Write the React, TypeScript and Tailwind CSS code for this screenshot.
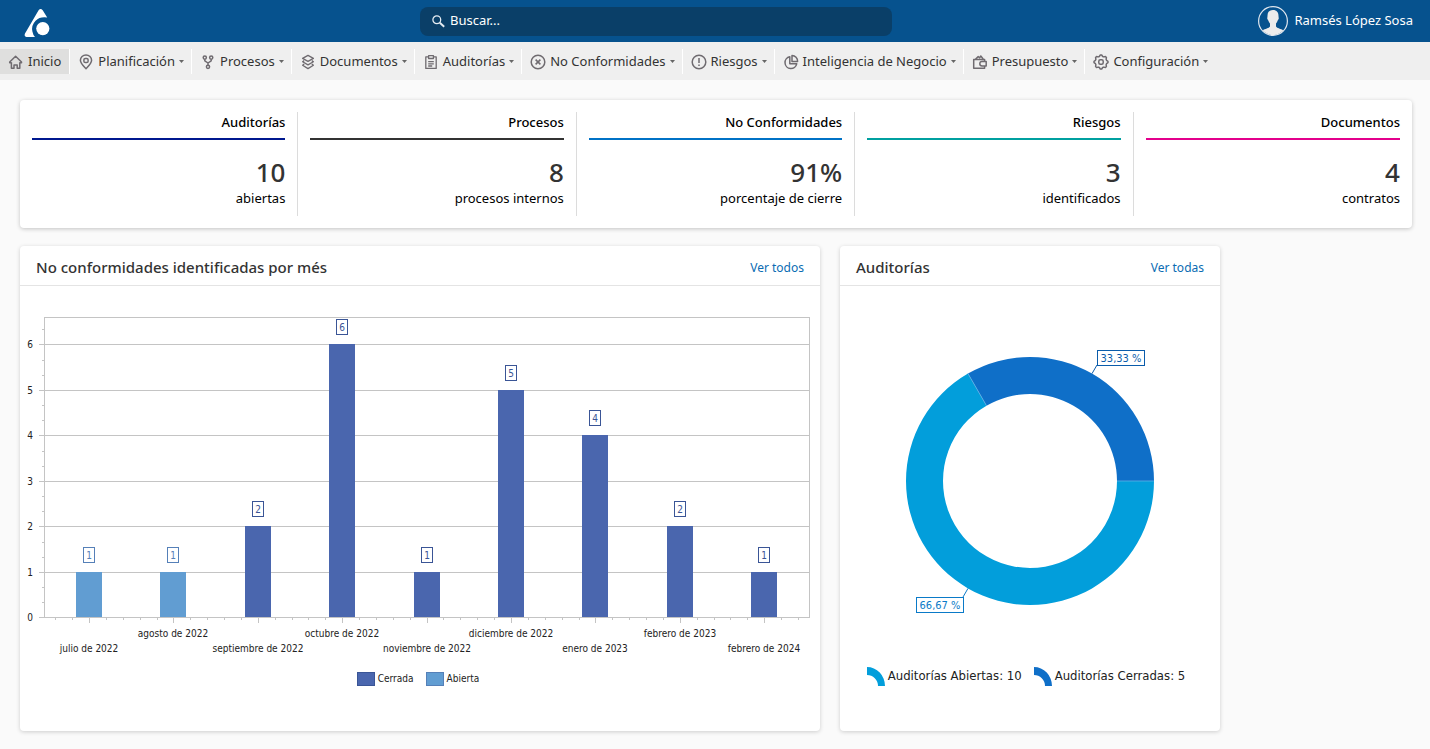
import type { ReactNode } from 'react';

const iconProps = {
  viewBox: '0 0 16 16',
  fill: 'none',
  stroke: '#6f6b70',
  strokeWidth: 1.5,
  strokeLinejoin: 'round' as const,
  'aria-hidden': true,
  className: 'size-4 shrink-0',
};

const gearTeeth = 8;
const gearPath =
  Array.from({ length: gearTeeth * 4 }, (_, i) => {
    const angle = ((i - 0.5) / (gearTeeth * 4)) * Math.PI * 2;
    const r = i % 4 < 2 ? 7 : 5.8;
    const x = 8 + r * Math.sin(angle);
    const y = 8 - r * Math.cos(angle);
    return `${i ? 'L' : 'M'}${x.toFixed(2)} ${y.toFixed(2)}`;
  }).join('') + 'Z';

const icons: Record<string, ReactNode> = {
  home: (
    <svg {...iconProps}>
      <path d="M3.4 8.800H1.700V8L7.600 2.200 13.500 8V8.800H11.800M3.400 8.200V14.200H6V11H9.200V14.200H11.800V8.200" />
    </svg>
  ),
  pin: (
    <svg {...iconProps}>
      <path d="M8 14.8C5 11.6 2.4 9.2 2.4 6.3a5.6 5.4 0 0 1 11.2 0C13.6 9.2 11 11.6 8 14.8Z" />
      <rect x="5.9" y="4.4" width="4.2" height="4.2" rx="1.4" />
    </svg>
  ),
  fork: (
    <svg {...iconProps}>
      <circle cx="4.8" cy="3.6" r="1.6" />
      <circle cx="11.2" cy="3.6" r="1.6" />
      <circle cx="8" cy="12.8" r="1.6" />
      <path d="M4.8 5.2v1.6L8 9l3.2-2.2V5.2M8 9v2.2" />
    </svg>
  ),
  layers: (
    <svg {...iconProps} strokeWidth={1.3}>
      <path d="M8 1.4 13.4 4.4 8 7.4 2.6 4.4ZM4.200 6.600 2.600 7.700 8 10.900l5.400-3.200L11.800 6.600M4.200 9.900l-1.600 1.300L8 14.600l5.400-3.400L11.800 9.900" />
    </svg>
  ),
  clipboard: (
    <svg {...iconProps}>
      <path d="M5.5 2.8H2.8v11.6h10.4V2.8h-2.700M5.600 1.700h4.800v2.800H5.600ZM5.200 7.600h5.600M5.200 9.800h5.600M5.200 12h4" strokeWidth="1.3" />
    </svg>
  ),
  close: (
    <svg {...iconProps}>
      <circle cx="8" cy="8" r="6.8" />
      <path d="m5.6 5.6 4.8 4.8M10.4 5.6l-4.8 4.8" />
    </svg>
  ),
  alert: (
    <svg {...iconProps}>
      <circle cx="8" cy="8" r="6.8" />
      <path d="M8 4v5M8 10.4v1.6" />
    </svg>
  ),
  pie: (
    <svg {...iconProps}>
      <path d="M6.8 2.8a5.9 5.9 0 1 0 6.9 7H6.8Z" />
      <path d="M9 1.4a5.8 5.8 0 0 1 5.6 6H9Z" />
    </svg>
  ),
  wallet: (
    <svg {...iconProps}>
      <path d="M12.600 7.600V5.400H1.700v8.800h10.900v-2M14.200 7.600H10a2.200 2.200 0 0 0 0 4.400h4.200ZM3.400 5.200l2.800-2.600 1.400 1.200L8.800 2l2.400 3" />
    </svg>
  ),
  gear: (
    <svg {...iconProps}>
      <path d={gearPath} />
      <rect x="5.8" y="5.8" width="4.4" height="4.4" rx="1.5" />
    </svg>
  ),
};

const navItems = [
  { label: 'Inicio', icon: 'home', active: true },
  { label: 'Planificación', icon: 'pin' },
  { label: 'Procesos', icon: 'fork' },
  { label: 'Documentos', icon: 'layers' },
  { label: 'Auditorías', icon: 'clipboard' },
  { label: 'No Conformidades', icon: 'close' },
  { label: 'Riesgos', icon: 'alert' },
  { label: 'Inteligencia de Negocio', icon: 'pie' },
  { label: 'Presupuesto', icon: 'wallet' },
  { label: 'Configuración', icon: 'gear' },
];

const stats = [
  { title: 'Auditorías', value: '10', note: 'abiertas', line: 'border-[#00188f]' },
  { title: 'Procesos', value: '8', note: 'procesos internos', line: 'border-[#333333]' },
  { title: 'No Conformidades', value: '91%', note: 'porcentaje de cierre', line: 'border-[#0072c6]' },
  { title: 'Riesgos', value: '3', note: 'identificados', line: 'border-[#00a0a0]' },
  { title: 'Documentos', value: '4', note: 'contratos', line: 'border-[#e3008c]' },
];

const closed = { fill: '#4a66ae', stroke: '#3a5596' };
const open = { fill: '#619dd2', stroke: '#5580b8' };

const months = [
  { label: 'julio de 2022', count: 1, series: open },
  { label: 'agosto de 2022', count: 1, series: open },
  { label: 'septiembre de 2022', count: 2, series: closed },
  { label: 'octubre de 2022', count: 6, series: closed },
  { label: 'noviembre de 2022', count: 1, series: closed },
  { label: 'diciembre de 2022', count: 5, series: closed },
  { label: 'enero de 2023', count: 4, series: closed },
  { label: 'febrero de 2023', count: 2, series: closed },
  { label: 'febrero de 2024', count: 1, series: closed },
];

const chartFont = "font-['DejaVu_Sans_Condensed','DejaVu_Sans',sans-serif]";

function Header() {
  return (
    <header className="grid h-[42px] grid-cols-[420fr_472fr_538fr] items-center bg-[#06528e] text-white">
      <a href="#inicio" aria-label="Inicio" className="ml-5 w-fit">
        <svg viewBox="20 4 34 34" className="size-[34px]" aria-hidden="true">
          <path
            fill="#fff"
            d="M38.6 10.2Q40.6 7.6 42.7 10.2L47.2 17.6Q40 16.4 35.6 20.8Q31 25.6 32.4 31.6Q33 35 35 37H26.4Q23.8 36.4 25 33.6Z"
          />
          <circle cx="42.8" cy="28.6" r="6.6" fill="#fff" />
        </svg>
      </a>
      <label className="flex h-[29px] items-center gap-[5px] rounded-lg bg-[#0a3f68] px-3 text-[13px]">
        <svg viewBox="0 0 13 13" className="size-[13px] shrink-0" fill="none" stroke="#e6ecf2" aria-hidden="true">
          <circle cx="4.8" cy="4.8" r="3.9" strokeWidth="1.3" />
          <path d="m7.8 7.8 4.4 4" strokeWidth="1.9" />
        </svg>
        <input
          type="search"
          aria-label="Buscar"
          placeholder="Buscar..."
          className="min-w-0 flex-1 bg-transparent outline-none placeholder:text-white"
        />
      </label>
      <button type="button" className="mr-[17px] flex items-center gap-[5px] justify-self-end text-[13px]">
        <svg viewBox="0 0 32 32" className="size-8" aria-hidden="true">
          <circle cx="16" cy="16" r="14.4" fill="none" stroke="#dfe6ee" strokeWidth="1.2" />
          <path
            fill="#ececec"
            d="M16 5c-3.900 0-5.600 2.600-5.500 6 0 1.200-.4 1.600-.2 2.800.2 1 .9 1.200 1.100 2 .3 1.200 1 2.100 1.600 2.800v2.800c-1 1.800-5 2.300-7.300 3.900A14.300 14.300 0 0 0 16 30.200a14.300 14.300 0 0 0 10.300-4.900c-2.300-1.600-6.300-2.100-7.300-3.900v-2.800c.6-.7 1.300-1.600 1.600-2.800.2-.8.900-1 1.100-2 .2-1.200-.2-1.600-.2-2.800.1-3.400-1.600-6-5.500-6Z"
          />
        </svg>
        Ramsés López Sosa
      </button>
    </header>
  );
}

function Nav() {
  return (
    <nav className="h-[38px] bg-[#efefef] pt-[7px]">
      <ul className="flex">
        {navItems.map((item) => (
          <li key={item.label} className="border-r border-white last:border-r-0">
            <a
              href="#"
              className={`flex h-[25px] items-center gap-1 whitespace-nowrap pl-2 text-[13px] text-[#333] ${
                item.active ? 'bg-[#dfdfde] pr-2' : 'pr-[7px]'
              }`}
            >
              {icons[item.icon]}
              {item.label}
              {!item.active && (
                <svg viewBox="0 0 5 3" className="h-[3px] w-[5px]" aria-hidden="true">
                  <path d="M0 0h5L2.500 3Z" fill="#666" />
                </svg>
              )}
            </a>
          </li>
        ))}
      </ul>
    </nav>
  );
}

function Stats() {
  return (
    <section className="grid grid-cols-5 rounded-sm bg-white py-3 shadow-[0_1px_4px_rgba(0,0,0,0.22)]">
      {stats.map((s) => (
        <div key={s.title} className="border-r border-[#dcdcdc] px-3 text-right text-[13px] leading-5 text-black last:border-r-0">
          <h2 className={`border-b-2 pb-[6px] font-medium ${s.line}`}>{s.title}</h2>
          <p className="mt-4 text-[26px] leading-8 font-medium text-[#333]">{s.value}</p>
          <p className="pb-2">{s.note}</p>
        </div>
      ))}
    </section>
  );
}

function Card({ title, link, children }: { title: string; link: string; children: ReactNode }) {
  return (
    <section className="rounded-sm bg-white shadow-[0_1px_4px_rgba(0,0,0,0.18)]">
      <div className="flex h-10 items-center justify-between border-b border-[#e4e4e4] px-4 pt-1">
        <h2 className="text-[15px] font-medium text-[#333]">{title}</h2>
        <a href="#" className="text-xs text-[#0a6cb3]">
          {link}
        </a>
      </div>
      {children}
    </section>
  );
}

const baseY = 331;
const unit = 45.5;
const step = 84.4;
const firstX = 69;

function BarChart() {
  const levels = [0, 1, 2, 3, 4, 5, 6];
  return (
    <svg viewBox="0 0 800 374" className={`block w-full text-[10px] ${chartFont}`} role="img" aria-label="No conformidades por mes">
      <g fill="none" stroke="#c4c4c4" shapeRendering="crispEdges">
        <rect x="24.5" y="31.5" width="765" height="300" />
        {levels.map((v) => {
          const y = Math.round(baseY - v * unit) + 0.5;
          return (
            <g key={v}>
              <path d={`M19 ${y}H${v ? 789 : 24}`} />
              <path d={`M22 ${y - 15}H24`} />
              {v < 6 && <path d={`M22 ${y - 30}H24`} />}
            </g>
          );
        })}
        {Array.from({ length: 45 }, (_, i) => {
          const x = Math.round(firstX + ((i - 2) * step) / 5) + 0.5;
          return <path key={i} d={`M${x} 332v${i % 5 === 2 ? 5 : 2}`} />;
        })}
      </g>
      {levels.map((v) => (
        <text key={v} x="13" y={Math.round(baseY - v * unit) + 4} textAnchor="end" fill="#222">
          {v}
        </text>
      ))}
      {months.map((m, i) => {
        const cx = Math.round(firstX + i * step);
        const top = Math.round(baseY - m.count * unit);
        return (
          <g key={m.label}>
            <rect x={cx - 13} y={top} width="26" height={baseY - top} fill={m.series.fill} shapeRendering="crispEdges" />
            <rect x={cx - 5.5} y={top - 24.5} width="11" height="15" fill="#fff" stroke={m.series.stroke} shapeRendering="crispEdges" />
            <text x={cx} y={top - 13} textAnchor="middle" fill={m.series.stroke}>
              {m.count}
            </text>
            <text x={cx} y={i % 2 ? 351 : 366} textAnchor="middle" fill="#222">
              {m.label}
            </text>
          </g>
        );
      })}
    </svg>
  );
}

function BarLegend() {
  return (
    <ul className={`flex h-[71px] justify-center gap-3 pt-[12px] pr-1 text-[10px] leading-[14px] text-[#222] ${chartFont}`}>
      <li className="flex gap-[3px]">
        <span className="h-[14px] w-[18px] border border-[#3a5596] bg-[#4a66ae]" />
        Cerrada
      </li>
      <li className="flex gap-[3px]">
        <span className="h-[14px] w-[18px] border border-[#5580b8] bg-[#619dd2]" />
        Abierta
      </li>
    </ul>
  );
}

function Donut() {
  return (
    <svg viewBox="0 0 380 374" className={`block w-full text-[11px] ${chartFont}`} role="img" aria-label="Auditorías abiertas y cerradas">
      <path d="M314 195A124 124 0 1 1 128 87.610L146.500 119.660A87 87 0 1 0 277 195Z" fill="#029edb" />
      <path d="M314 195A124 124 0 0 0 128 87.610L146.500 119.660A87 87 0 0 1 277 195Z" fill="#0f6fc8" />
      <path d="M128 87.610 146.500 119.660M277 195H314" stroke="#5fb0e6" strokeWidth="0.8" />
      <path d="M252 87.600 257 79" stroke="#0a5cab" />
      <path d="M128 302.400 123 311" stroke="#0a7ac8" />
      <rect x="257.5" y="64.5" width="47" height="15" fill="#fff" stroke="#0a5cab" />
      <text x="281" y="76" textAnchor="middle" fill="#0a5cab">
        33,33 %
      </text>
      <rect x="76.5" y="311.5" width="47" height="15" fill="#fff" stroke="#0a7ac8" />
      <text x="100" y="323" textAnchor="middle" fill="#0a7ac8">
        66,67 %
      </text>
    </svg>
  );
}

function DonutLegend() {
  const entries = [
    { label: 'Auditorías Abiertas: 10', color: '#029edb' },
    { label: 'Auditorías Cerradas: 5', color: '#0f6fc8' },
  ];
  return (
    <ul className={`flex h-[71px] justify-center gap-3 pt-[7px] pr-2 text-[13px] leading-[18px] whitespace-nowrap text-[#222] ${chartFont}`}>
      {entries.map((e) => (
        <li key={e.label} className="flex gap-[3px]">
          <svg viewBox="0 0 18 19" className="h-[19px] w-[18px]" aria-hidden="true">
            <path d="M0 0A18 19 0 0 1 18 19H11A11 11 0 0 0 0 8Z" fill={e.color} />
          </svg>
          {e.label}
        </li>
      ))}
    </ul>
  );
}

export default function App() {
  return (
    <div className="min-h-screen bg-[#fafafa] font-['Noto_Sans','Open_Sans',sans-serif]">
      <Header />
      <Nav />
      <main className="pt-5 pr-[18px] pb-[18px] pl-5">
        <Stats />
        <div className="mt-[18px] grid grid-cols-[800fr_380fr_172fr] gap-5">
          <Card title="No conformidades identificadas por més" link="Ver todos">
            <BarChart />
            <BarLegend />
          </Card>
          <Card title="Auditorías" link="Ver todas">
            <Donut />
            <DonutLegend />
          </Card>
        </div>
      </main>
    </div>
  );
}
